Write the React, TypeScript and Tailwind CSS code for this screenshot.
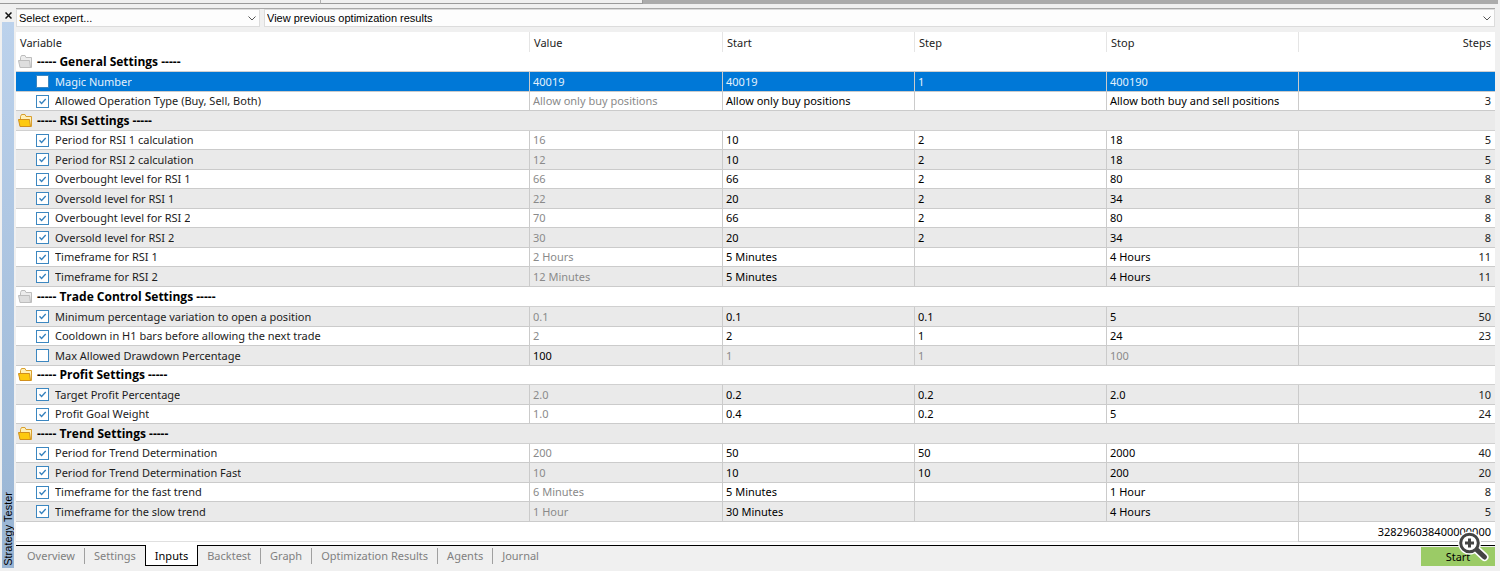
import { useId, useState } from "react";
import { clsx } from "clsx";

interface Param {
  name: string;
  group?: "open" | "closed";
  checked?: boolean;
  selected?: boolean;
  value?: string;
  start?: string;
  step?: string;
  stop?: string;
  steps?: string;
}

const params: Param[] = [
  { name: "----- General Settings -----", group: "closed" },
  { name: "Magic Number", checked: false, selected: true, value: "40019", start: "40019", step: "1", stop: "400190" },
  { name: "Allowed Operation Type (Buy, Sell, Both)", checked: true, value: "Allow only buy positions", start: "Allow only buy positions", stop: "Allow both buy and sell positions", steps: "3" },
  { name: "----- RSI Settings -----", group: "open" },
  { name: "Period for RSI 1 calculation", checked: true, value: "16", start: "10", step: "2", stop: "18", steps: "5" },
  { name: "Period for RSI 2 calculation", checked: true, value: "12", start: "10", step: "2", stop: "18", steps: "5" },
  { name: "Overbought level for RSI 1", checked: true, value: "66", start: "66", step: "2", stop: "80", steps: "8" },
  { name: "Oversold level for RSI 1", checked: true, value: "22", start: "20", step: "2", stop: "34", steps: "8" },
  { name: "Overbought level for RSI 2", checked: true, value: "70", start: "66", step: "2", stop: "80", steps: "8" },
  { name: "Oversold level for RSI 2", checked: true, value: "30", start: "20", step: "2", stop: "34", steps: "8" },
  { name: "Timeframe for RSI 1", checked: true, value: "2 Hours", start: "5 Minutes", stop: "4 Hours", steps: "11" },
  { name: "Timeframe for RSI 2", checked: true, value: "12 Minutes", start: "5 Minutes", stop: "4 Hours", steps: "11" },
  { name: "----- Trade Control Settings -----", group: "closed" },
  { name: "Minimum percentage variation to open a position", checked: true, value: "0.1", start: "0.1", step: "0.1", stop: "5", steps: "50" },
  { name: "Cooldown in H1 bars before allowing the next trade", checked: true, value: "2", start: "2", step: "1", stop: "24", steps: "23" },
  { name: "Max Allowed Drawdown Percentage", checked: false, value: "100", start: "1", step: "1", stop: "100" },
  { name: "----- Profit Settings -----", group: "open" },
  { name: "Target Profit Percentage", checked: true, value: "2.0", start: "0.2", step: "0.2", stop: "2.0", steps: "10" },
  { name: "Profit Goal Weight", checked: true, value: "1.0", start: "0.4", step: "0.2", stop: "5", steps: "24" },
  { name: "----- Trend Settings -----", group: "open" },
  { name: "Period for Trend Determination", checked: true, value: "200", start: "50", step: "50", stop: "2000", steps: "40" },
  { name: "Period for Trend Determination Fast", checked: true, value: "10", start: "10", step: "10", stop: "200", steps: "20" },
  { name: "Timeframe for the fast trend", checked: true, value: "6 Minutes", start: "5 Minutes", stop: "1 Hour", steps: "8" },
  { name: "Timeframe for the slow trend", checked: true, value: "1 Hour", start: "30 Minutes", stop: "4 Hours", steps: "5" },
];

const tabs = ["Overview", "Settings", "Inputs", "Backtest", "Graph", "Optimization Results", "Agents", "Journal"];

const Folder = ({ open }: { open: boolean }) => (
  <svg viewBox="0 0 15 14" className="h-3.5 w-[15px] shrink-0" aria-hidden="true">
    <path
      d="M2.500 12.500V2.500l1-2h3.500l1 2h5.500v10z"
      fill={open ? "#fff0b8" : "#ececec"}
      stroke={open ? "#d9a02e" : "#bdbdbd"}
    />
    <path
      d="M.5 5.500h11l1 7H2z"
      fill={open ? "#fdc90f" : "#dedede"}
      stroke={open ? "#d18f1c" : "#bdbdbd"}
    />
  </svg>
);

const Chevron = () => (
  <svg viewBox="0 0 8 5" className="pointer-events-none absolute right-[3px] top-1.5 h-[5px] w-2" aria-hidden="true">
    <path d="M.5.5 4 4 7.5.5" fill="none" stroke="#555" />
  </svg>
);

const Dropdown = ({ label, className }: { label: string; className: string }) => (
  <div className={clsx("relative h-[18px] border border-[#dcdcdc] bg-[#fdfdfd]", className)}>
    <select
      aria-label={label}
      className="block h-4 w-full appearance-none bg-transparent pl-[2px] pr-4 font-['Liberation_Sans',Arial,sans-serif] text-[11px] leading-4 text-black outline-none"
    >
      <option>{label}</option>
    </select>
    <Chevron />
  </div>
);

const ParamRow = ({ param }: { param: Param }) => {
  const id = useId();
  const [checked, setChecked] = useState(!!param.checked);

  if (param.group) {
    return (
      <tr className={clsx("even:bg-[#eaeaea]", param.group === "closed" ? "h-5" : "odd:h-[19px] even:h-5")}>
        <th
          colSpan={6}
          className="border-b border-[#d0d0d0] p-0 text-left font-['Open_Sans','Noto_Sans',sans-serif] text-xs leading-[18px] font-bold"
        >
          <span className="flex items-center gap-1 pl-0.5">
            <Folder open={param.group === "open"} />
            {param.name}
          </span>
        </th>
      </tr>
    );
  }

  const cell = "truncate border-b border-l border-[#cbcbcb] py-0 pl-[3px] pr-1";
  const active = param.selected ? "" : "text-black";
  const dimmed = param.selected ? "" : "text-[#8a8a8a]";

  return (
    <tr
      className={clsx(
        "odd:h-[19px] even:h-5",
        param.selected ? "bg-[#0078d7] text-[#e4f1fc]" : "text-[#1c1c1c] even:bg-[#eaeaea]"
      )}
    >
      <td className="border-b border-[#cbcbcb] p-0">
        <div className="flex items-center gap-1.5 pl-5">
          <span className="relative h-[13px] w-[13px] shrink-0">
            <input
              id={id}
              type="checkbox"
              checked={checked}
              onChange={(e) => setChecked(e.target.checked)}
              className="block h-[13px] w-[13px] appearance-none border border-[#3c87c0] bg-white"
            />
            {checked && (
              <svg viewBox="0 0 13 13" className="pointer-events-none absolute inset-0" aria-hidden="true">
                <path d="M3.500 6.200 5.600 8.500 9.700 4" fill="none" stroke="#3380bd" strokeWidth="1.300" />
              </svg>
            )}
          </span>
          <label htmlFor={id} className="truncate">
            {param.name}
          </label>
        </div>
      </td>
      <td className={clsx(cell, checked ? dimmed : active)}>{param.value}</td>
      <td className={clsx(cell, checked ? active : dimmed)}>{param.start}</td>
      <td className={clsx(cell, checked ? active : dimmed)}>{param.step}</td>
      <td className={clsx(cell, checked ? active : dimmed)}>{param.stop}</td>
      <td className={clsx(cell, "text-right")}>{param.steps}</td>
    </tr>
  );
};

const InputsTable = () => (
  <table className="w-full table-fixed border-separate border-spacing-0 bg-white text-[11px] leading-[18px] text-black">
    <colgroup>
      <col />
      <col className="w-[193px]" />
      <col className="w-48" />
      <col className="w-48" />
      <col className="w-48" />
      <col className="w-[197px]" />
    </colgroup>
    <thead>
      <tr className="h-5 text-left text-[#1c1c1c]">
        <th className="pt-0.5 pb-0 pl-1 font-normal">Variable</th>
        <th className="border-l border-[#e5e5e5] pt-0.5 pb-0 pl-1 font-normal">Value</th>
        <th className="border-l border-[#e5e5e5] pt-0.5 pb-0 pl-1 font-normal">Start</th>
        <th className="border-l border-[#e5e5e5] pt-0.5 pb-0 pl-1 font-normal">Step</th>
        <th className="border-l border-[#e5e5e5] pt-0.5 pb-0 pl-1 font-normal">Stop</th>
        <th className="border-l border-[#e5e5e5] pt-0.5 pb-0 pr-1 text-right font-normal">Steps</th>
      </tr>
    </thead>
    <tbody>
      {params.map((param, i) => (
        <ParamRow key={i} param={param} />
      ))}
    </tbody>
    <tfoot>
      <tr className="h-5">
        <td colSpan={5} className="border-b border-[#e0e0e0] p-0" />
        <td className="border-b border-l border-[#cbcbcb] py-0 pr-1 text-right">328296038400000000</td>
      </tr>
    </tfoot>
  </table>
);

const Magnifier = () => (
  <svg viewBox="0 0 32 32" className="pointer-events-none absolute -top-4 right-1.5 h-8 w-8" aria-hidden="true">
    <path d="m19 18 8.500 8" stroke="#fff" strokeWidth="8" strokeLinecap="round" />
    <circle cx="12.500" cy="12" r="9.500" fill="#fff" stroke="#fff" strokeWidth="4" />
    <path d="m20 19 7.500 7" stroke="#444" strokeWidth="5" strokeLinecap="round" />
    <circle cx="12.500" cy="12" r="8.800" fill="#fff" stroke="#444" strokeWidth="3" />
    <path d="M12.500 7.500v9M8 12h9" stroke="#444" strokeWidth="3" />
  </svg>
);

export default function App() {
  const [tab, setTab] = useState("Inputs");

  return (
    <div className="flex min-h-screen flex-col bg-[#f0f0f0] font-['Noto_Sans','Open_Sans',sans-serif]">
      {/* Bottom edge of the panels above */}
      <div className="flex h-1">
        <div className="w-[321px] border-b border-r border-b-[#9a9a9a] border-r-[#b0b0b0]" />
        <div className="w-[322px] border-b border-r border-[#9a9a9a]" />
        <div className="mr-0.5 flex-1 bg-[#ababab]" />
      </div>

      <div className="flex flex-1 pt-1">
        <aside className="flex w-4 flex-col items-center pb-[3px]">
          <button type="button" aria-label="Close" className="flex h-3.5 w-full items-center justify-center">
            <svg viewBox="0 0 7 7" className="h-[7px] w-[7px]" aria-hidden="true">
              <path d="m.5.5 6 6m0-6-6 6" stroke="#111" strokeWidth="1.500" />
            </svg>
          </button>
          <div className="flex w-3 flex-1 items-center justify-end bg-linear-to-b from-[#bcd2ec] to-[#98b4d3] [writing-mode:vertical-rl]">
            <span className="rotate-180 pt-0.5 font-['Liberation_Sans',Arial,sans-serif] text-[11px] leading-3 text-black">
              Strategy Tester
            </span>
          </div>
        </aside>

        <main className="mr-[5px] flex min-w-0 flex-1 flex-col">
          <div className="flex h-6 gap-1 border-t border-[#a8a8a8]">
            <Dropdown label="Select expert..." className="w-[244px]" />
            <Dropdown label="View previous optimization results" className="flex-1" />
          </div>

          <InputsTable />
          <div className="h-[3px] bg-white" />

          <footer className="flex justify-between border-t border-black">
            <nav className="flex h-5 pl-0.5 text-[11px] leading-[18px] text-[#808080]">
              {tabs.map((name, i) => (
                <button
                  key={name}
                  type="button"
                  onClick={() => setTab(name)}
                  className={clsx(
                    "flex items-center px-[9px]",
                    name === tab ? "-mt-px border border-t-0 border-black bg-white pt-px text-black" : "my-0.5",
                    name !== tab && tabs[i + 1] !== tab && i < tabs.length - 1 && "border-r border-[#a0a0a0]"
                  )}
                >
                  {name}
                </button>
              ))}
            </nav>
            <div className="relative mt-px">
              <button type="button" className="block h-[19px] w-[74px] bg-[#9bcb66] text-[11px] leading-[18px] text-black">
                Start
              </button>
              <Magnifier />
            </div>
          </footer>
        </main>
      </div>
    </div>
  );
}
